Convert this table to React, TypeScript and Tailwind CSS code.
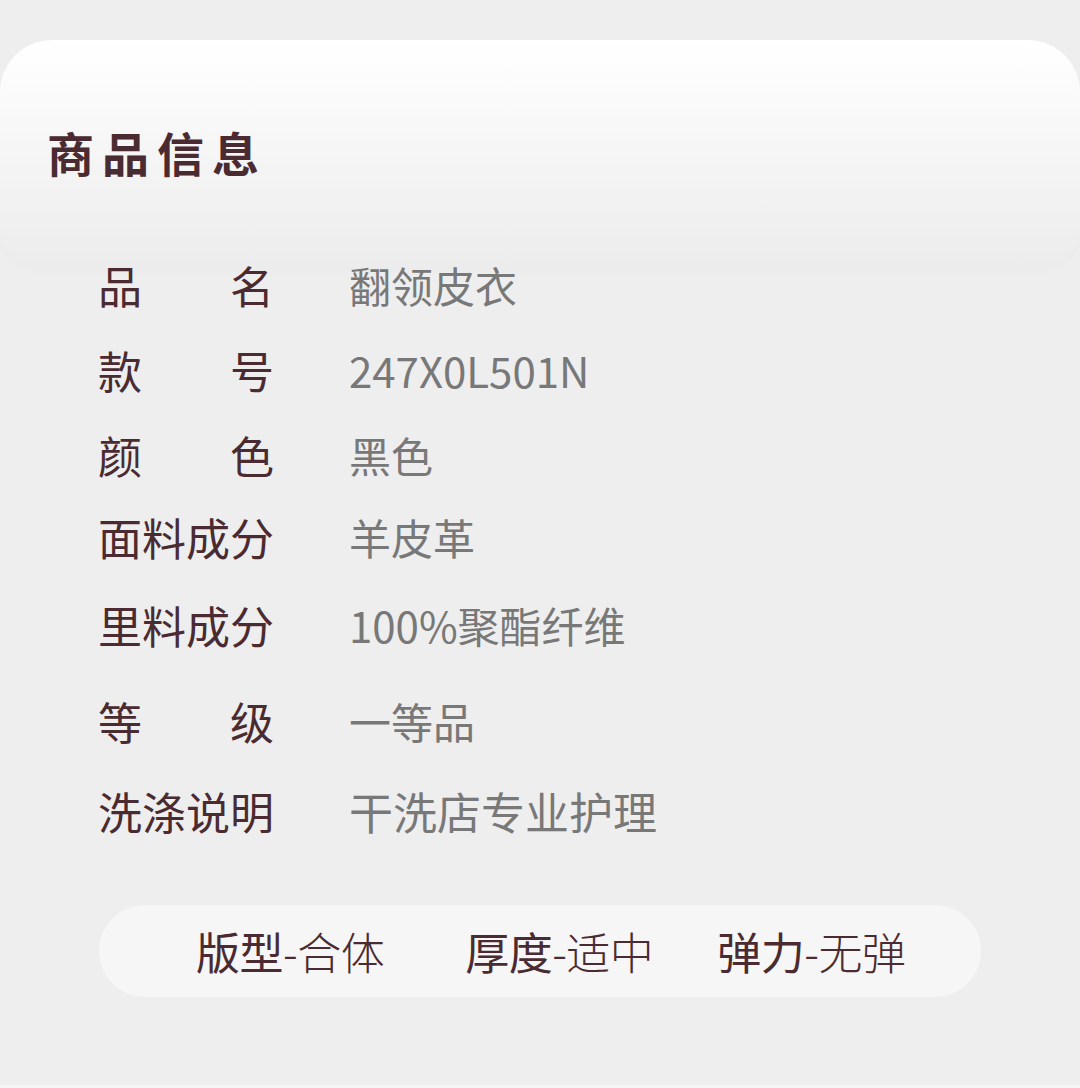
import React from "react";

const rows: { label: string; value: string; mt: string; size: string }[] = [
  { label: "品名", value: "翻领皮衣", mt: "mt-[-5px]", size: "text-[42px]" },
  { label: "款号", value: "247X0L501N", mt: "mt-[41px]", size: "text-[42px]" },
  { label: "颜色", value: "黑色", mt: "mt-[41px]", size: "text-[42px]" },
  { label: "面料成分", value: "羊皮革", mt: "mt-[38px]", size: "text-[42px]" },
  { label: "里料成分", value: "100%聚酯纤维", mt: "mt-[44px]", size: "text-[42px]" },
  { label: "等级", value: "一等品", mt: "mt-[52px]", size: "text-[42px]" },
  { label: "洗涤说明", value: "干洗店专业护理", mt: "mt-[46px]", size: "text-[44px]" },
];

const tags = [
  { k: "版型", v: "合体", ml: "ml-[97px]" },
  { k: "厚度", v: "适中", ml: "ml-[81px]" },
  { k: "弹力", v: "无弹", ml: "ml-[64px]" },
];

function Label({ text }: { text: string }) {
  if (text.length === 2) {
    return (
      <div className="flex w-[176px] justify-between">
        <span>{text[0]}</span>
        <span>{text[1]}</span>
      </div>
    );
  }
  return <div className="w-[176px]">{text}</div>;
}

export default function App() {
  return (
    <div className="flex min-h-[1088px] flex-col bg-[#eeeeee] pt-[40px] font-['Noto_Sans_CJK_SC',sans-serif] text-[#4a2b31]">
      <div className="flex h-[228px] items-center rounded-t-[52px] rounded-b-[40px] bg-gradient-to-b from-white to-[#ececec] pl-[47px] shadow-[0_4px_10px_rgba(0,0,0,0.015)]">
        <h2 className="mt-[-6px] text-[47px] font-bold leading-none tracking-[8px]">商品信息</h2>
      </div>

      <div className="flex flex-col">
        {rows.map((r) => (
          <div key={r.label} className={`${r.mt} flex h-[44px] items-center pl-[98px] text-[44px] leading-[44px]`}>
            <Label text={r.label} />
            <div className={`ml-[75px] ${r.size} text-[#787878]`}>{r.value}</div>
          </div>
        ))}
      </div>

      <div className="mx-[99px] mt-[72px] flex h-[92px] items-center rounded-full bg-[#f6f6f6] text-[44px] leading-none tracking-[-0.5px]">
        {tags.map((t) => (
          <div key={t.k} className={`${t.ml} flex items-center`}>
            <span className="font-normal">{t.k}</span>
            <span className="font-light">-{t.v}</span>
          </div>
        ))}
      </div>

      <div className="flex-1" />
      <div className="h-[3px] bg-[#f5f5f5]" />
    </div>
  );
}
